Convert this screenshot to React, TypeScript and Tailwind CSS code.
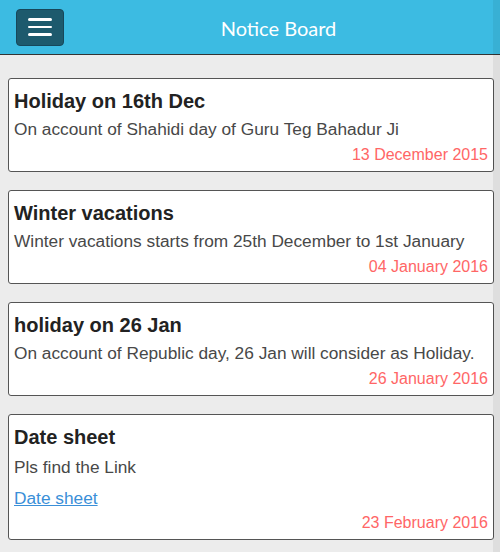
const notices = [
  {title: "Holiday on 16th Dec", content: "On account of Shahidi day of Guru Teg Bahadur Ji", date: "13 December 2015"},
  {title: "Winter vacations", content: "Winter vacations starts from 25th December to 1st January", date: "04 January 2016"},
  {title: "holiday on 26 Jan", content: "On account of Republic day, 26 Jan will consider as Holiday.", date: "26 January 2016"},
  {title: "Date sheet", content: "Pls find the Link", link: "Date sheet", date: "23 February 2016"},
]

const App: React.FC = () => {
  return (
    <div className="relative min-h-[552px] bg-[#ececec] [font-family:'Liberation_Sans',Arial,sans-serif]">
      <header className="flex h-[55px] items-center border-b border-[#333] bg-[#3cbbe2] pl-4 pr-[7px]">
        <button className="flex h-[37px] w-[48px] flex-col items-center justify-center gap-[5px] rounded-[4px] border border-[#17475a] bg-[#1d5a6d]">
          <span className="h-[2.5px] w-[24px] rounded bg-white" />
          <span className="h-[2.5px] w-[24px] rounded bg-white" />
          <span className="h-[2.5px] w-[24px] rounded bg-white" />
        </button>
        <h1 className="flex-1 pt-[2px] text-center [font-family:Lato,sans-serif] text-[20px] text-white">Notice Board</h1>
      </header>

      <main className="flex flex-col gap-[18px] pl-2 pr-[6px] pt-[23px] pb-3">
        {notices.map((n) => (
          <div key={n.title} className="rounded-[3px] border border-[#555] bg-white px-[5px] pt-[10px] pb-[7px]">
            <h2 className="text-[20px] font-bold leading-[24px] text-[#222]">{n.title}</h2>
            <p className={`${n.link ? "mt-[8px]" : "mt-[6px]"} text-[17.3px] leading-[20px] text-[#484848]`}>{n.content}</p>
            {n.link && (
              <a href="#" className="mt-[11px] block w-fit text-[17.3px] leading-[20px] text-[#3a8fd8] underline">{n.link}</a>
            )}
            <p className={`${n.link ? "mt-[6px]" : "mt-[7px]"} text-right text-[16px] leading-[18px] text-[#ff6666]`}>{n.date}</p>
          </div>
        ))}
      </main>

      <div className="absolute right-0 top-0 h-full w-[7px] bg-black/[0.06]" />
    </div>
  )
}

export default App;
